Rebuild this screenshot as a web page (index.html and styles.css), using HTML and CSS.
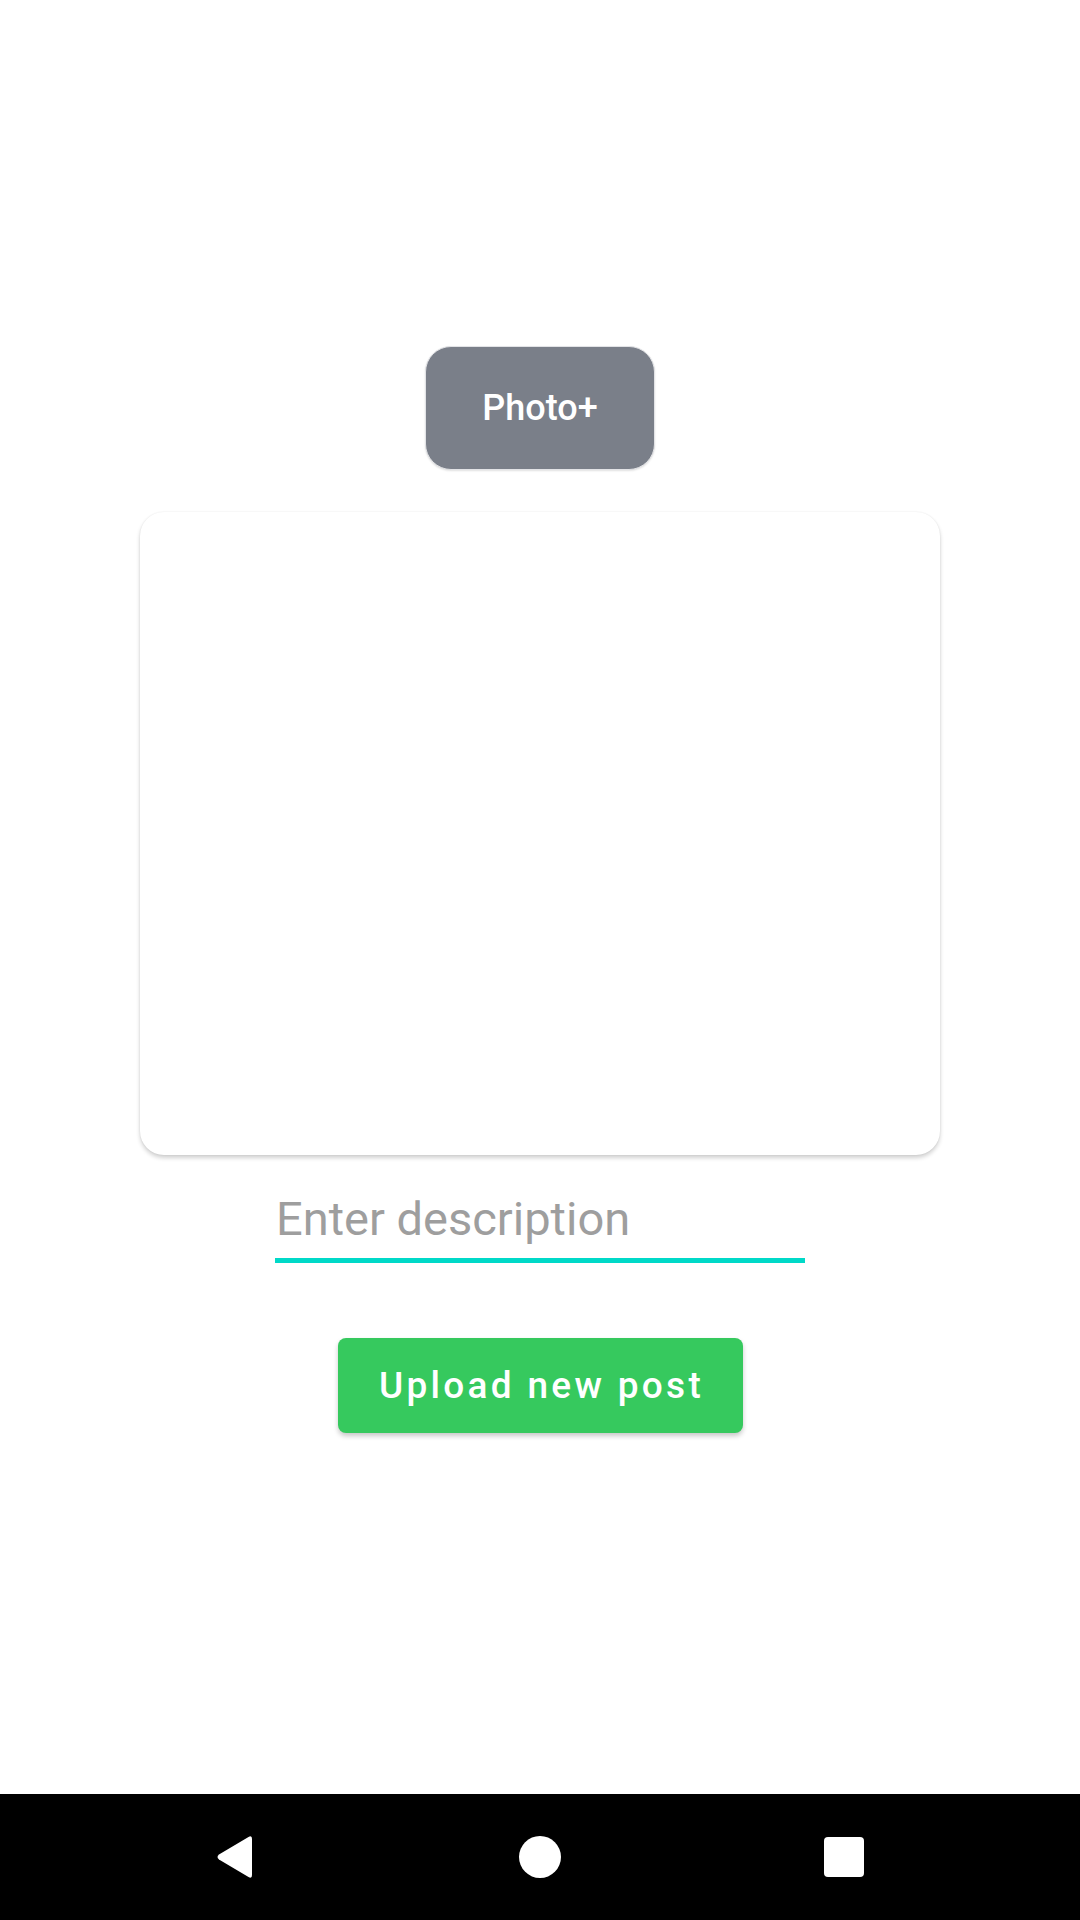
FILE: index.html
```html
<!DOCTYPE html>
<html>
<head>
<meta charset="utf-8">
<link rel="stylesheet" href="styles.css">
</head>
<body>
<div class="screen">
  <main class="content">
    <button class="photo-btn">Photo+</button>
    <div class="card"></div>
    <div class="field">
      <span class="placeholder">Enter description</span>
    </div>
    <button class="upload-btn">Upload new post</button>
  </main>
  <nav class="navbar">
    <svg class="nav-back" width="40" height="44" viewBox="0 0 40 44">
      <path d="M36 4 L36 40 Q36 44 32.5 42 L3 24.5 Q0 22 3 19.5 L32.5 2 Q36 0 36 4 Z" fill="#fff"/>
    </svg>
    <span class="nav-home"></span>
    <span class="nav-recent"></span>
  </nav>
</div>
</body>
</html>
```

FILE: styles.css
```css
html, body {
  margin: 0;
  padding: 0;
  background: #ffffff;
}

.screen {
  width: 1080px;
  height: 1920px;
  display: flex;
  flex-direction: column;
  font-family: Roboto, "Noto Sans", sans-serif;
}

.content {
  flex: 1;
  display: flex;
  flex-direction: column;
  align-items: center;
  padding-top: 346px;
  box-sizing: border-box;
}

.photo-btn {
  width: 230px;
  height: 124px;
  border-radius: 26px;
  background: #7a7f89;
  border: 1px solid #e2e3e6;
  box-shadow: 0 1px 2px rgba(0, 0, 0, 0.12);
  color: #ffffff;
  font-family: Roboto, sans-serif;
  font-weight: 500;
  font-size: 36px;
  padding: 0;
  box-sizing: border-box;
}

.card {
  margin-top: 42px;
  width: 800px;
  height: 643px;
  background: #ffffff;
  border-radius: 24px;
  box-shadow: 0 3px 4px rgba(0, 0, 0, 0.18), 0 0 2px rgba(0, 0, 0, 0.08);
}

.field {
  margin-top: 36px;
  width: 530px;
  height: 67px;
  border-bottom: 5px solid #00d9c8;
  line-height: 56px;
  box-sizing: content-box;
}

.placeholder {
  font-size: 47px;
  color: #9e9e9e;
  padding-left: 1px;
}

.upload-btn {
  margin-top: 75px;
  width: 405px;
  height: 95px;
  border: none;
  border-radius: 8px;
  background: #36c95e;
  color: #ffffff;
  font-family: Roboto, sans-serif;
  font-weight: 500;
  font-size: 37px;
  letter-spacing: 3.3px;
  padding: 0 0 0 3px;
  box-shadow: 0 3px 5px rgba(0, 0, 0, 0.22);
}

.navbar {
  height: 126px;
  background: #000000;
  display: flex;
  align-items: center;
  justify-content: center;
  position: relative;
}

.nav-back {
  position: absolute;
  left: 216px;
  top: 41px;
}

.nav-home {
  width: 42px;
  height: 42px;
  border-radius: 50%;
  background: #ffffff;
}

.nav-recent {
  position: absolute;
  left: 824px;
  top: 43px;
  width: 40px;
  height: 40px;
  border-radius: 4px;
  background: #ffffff;
}
```
